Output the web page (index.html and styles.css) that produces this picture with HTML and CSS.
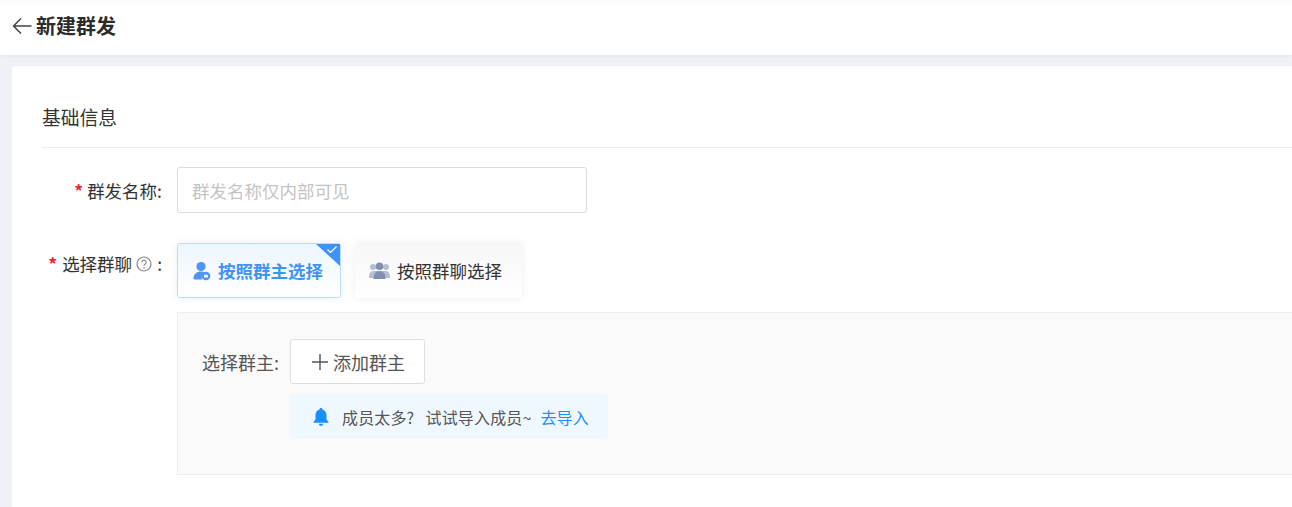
FILE: index.html
```html
<!DOCTYPE html>
<html lang="zh-CN">
<head>
<meta charset="utf-8">
<title>新建群发</title>
<link rel="stylesheet" href="styles.css">
</head>
<body>
<header class="topbar">
  <svg class="back" width="20" height="18" viewBox="0 0 20 18"><path d="M19.5 9H1.5M9 1.5L1.5 9L9 16.5" fill="none" stroke="#444" stroke-width="1.5"/></svg>
  <h1 class="title">新建群发</h1>
</header>
<main class="card">
  <h2 class="section">基础信息</h2>
  <div class="row row-name">
    <label class="label"><span class="req">*</span>群发名称:</label>
    <input class="input" placeholder="群发名称仅内部可见">
  </div>
  <div class="row row-group">
    <label class="label label-group"><span class="req req-wide">*</span>选择群聊
      <svg class="help" width="16" height="16" viewBox="0 0 16 16"><circle cx="8" cy="8" r="7" fill="none" stroke="#888" stroke-width="1.2"/><path d="M5.9 6.3a2.1 2.1 0 1 1 3.3 1.7c-.8.5-1.2.9-1.2 1.8" fill="none" stroke="#888" stroke-width="1.2"/><circle cx="8" cy="11.8" r=".8" fill="#888"/></svg>
      <span class="colon">:</span></label>
    <div class="group-body">
      <div class="choices">
        <div class="choice choice-on">
          <svg class="choice-icon" width="18" height="20" viewBox="0 0 18 20"><circle cx="8" cy="5.5" r="4.6" fill="#4f94f0"/><path d="M0.5 18c0-5 3-7.500 7.500-7.500 1.500 0 2.500.3 3.500.8a5 5 0 0 0-2 7.200H2c-1 0-1.500-.2-1.500-.5z" fill="#4f94f0"/><circle cx="13" cy="15" r="4.300" fill="#4f94f0"/><path d="M11 13.500l1.100 1 .9-1.500.9 1.500 1.100-1v3h-4z" fill="#fff"/></svg>
          <span>按照群主选择</span>
          <svg class="corner" width="24" height="22" viewBox="0 0 24 22"><path d="M0 0H24V22z" fill="#3d94f6"/><path d="M11.500 5.500l3 3 6-6" fill="none" stroke="#fff" stroke-width="1.200"/></svg>
        </div>
        <div class="choice">
          <svg class="choice-icon" width="21" height="18" viewBox="0 0 21 18"><circle cx="4" cy="5" r="3" fill="#b4bfd2"/><circle cx="17" cy="5" r="3" fill="#b4bfd2"/><path d="M0 15c0-4 1.500-6 4-6h13c2.500 0 4 2 4 6v1H0z" fill="#b4bfd2"/><circle cx="10.500" cy="4.300" r="3.800" fill="#7f8fb0"/><path d="M4.500 17c0-5 2-8 6-8s6 3 6 8z" fill="#7f8fb0"/></svg>
          <span>按照群聊选择</span>
        </div>
      </div>
      <section class="panel">
        <div class="owner">
          <span class="owner-label">选择群主:</span>
          <button class="add" type="button"><svg width="16" height="16" viewBox="0 0 16 16"><path d="M8 0V16M0 8H16" stroke="#555" stroke-width="1.400"/></svg>添加群主</button>
        </div>
        <div class="tip">
          <svg width="16" height="18" viewBox="0 0 16 18"><path d="M8 0c1 0 1.500.6 1.500 1.400C12 2.200 13.500 4.300 13.500 7v4.500l2 2.500v.8H.5V14l2-2.500V7c0-2.700 1.500-4.800 4-5.600C6.500.6 7 0 8 0zM5.800 15.800h4.400C10 17 9.200 18 8 18s-2-1-2.200-2.200z" fill="#1890ff"/></svg>
          <span class="tip-text">成员太多?&nbsp;&nbsp;&nbsp;试试导入成员~</span>
          <a class="tip-link" href="#">去导入</a>
        </div>
      </section>
    </div>
  </div>
</main>
</body>
</html>
```
FILE: styles.css
```css
* { box-sizing: border-box; }
html, body { height: 100%; }
body {
  margin: 0;
  overflow: hidden;
  background: #f0f1f6;
  font-family: "Noto Sans CJK SC", "Noto Sans", sans-serif;
  color: #333;
  display: flex;
  flex-direction: column;
}
.topbar {
  height: 55px;
  flex: none;
  background: linear-gradient(#fafafa 0, #fff 6px);
  display: flex;
  align-items: center;
  gap: 4px;
  padding: 0 0 4px 12px;
  box-shadow: 0 1px 4px rgba(0, 0, 0, .06);
}
.title { margin: 0; font-size: 20px; font-weight: 700; color: #2b2b2b; line-height: 28px; }
.card {
  flex: 1;
  margin: 11px -40px 0 12px;
  padding: 35px 0 0 30px;
  background: #fff;
  border-radius: 4px 0 0 0;
}
.section {
  margin: 0;
  height: 47px;
  font-size: 18.750px;
  font-weight: 400;
  line-height: 32px;
  color: #333;
  border-bottom: 1px solid #eeeeee;
}
.row { display: flex; }
.row-name { margin-top: 19px; height: 46px; }
.row-group { margin-top: 30px; }
.label {
  width: 120px;
  margin-right: 15px;
  flex: none;
  display: flex;
  align-items: center;
  justify-content: flex-end;
  font-size: 17.500px;
  color: #333;
  white-space: nowrap;
}
.label-group { align-items: flex-start; line-height: 42px; height: 42px; }
.req { color: #f5222d; margin-right: 4px; font-size: 17.500px; font-weight: 700; }
.req-wide { margin-right: 5px; }
.help { margin: 13px 0 0 4px; }
.colon { margin-left: 5px; }
.input {
  width: 410px;
  height: 46px;
  padding: 0 14px;
  border: 1px solid #dcdcdc;
  border-radius: 3px;
  font: inherit;
  font-size: 17.500px;
  outline: none;
}
.input::placeholder { color: #c4c4c4; }
.group-body { flex: 1; min-width: 0; }
.choices { display: flex; gap: 14px; }
.choice {
  position: relative;
  width: 167px;
  height: 55px;
  display: flex;
  align-items: center;
  gap: 7px;
  padding-left: 14px;
  border-radius: 3px;
  background: linear-gradient(#f7f7f9, #fff);
  box-shadow: 0 0 8px rgba(0, 0, 0, .07);
  font-size: 17.500px;
  color: #333;
}
.choice-on {
  width: 164px;
  padding-left: 15px;
  border: 1px solid #bcdcfc;
  background: linear-gradient(#edf5ff, #fff);
  color: #3d94f6;
  font-weight: 700;
}
.corner { position: absolute; top: 0; right: 0; }
.panel {
  margin-top: 14px;
  height: 163px;
  padding: 26px 0 0 24px;
  background: #fafafa;
  border: 1px solid #eeeeee;
}
.owner { display: flex; align-items: center; gap: 10px; }
.owner-label { font-size: 18px; color: #555; width: 78px; white-space: nowrap; }
.add {
  width: 135px;
  height: 45px;
  display: flex;
  align-items: center;
  justify-content: center;
  gap: 5px;
  padding: 0 0 0 2px;
  background: #fff;
  border: 1px solid #dedede;
  border-radius: 3px;
  font: inherit;
  font-size: 18px;
  color: #555;
}
.tip {
  width: 318px;
  height: 45px;
  margin: 10px 0 0 88px;
  padding-left: 23px;
  display: flex;
  align-items: center;
  background: #f0f8ff;
  border-radius: 2px;
  font-size: 16px;
  letter-spacing: .15px;
}
.tip-text { margin-left: 13px; color: #555; white-space: nowrap; }
.tip-link { margin-left: 9px; color: #1890ff; text-decoration: none; }
```
